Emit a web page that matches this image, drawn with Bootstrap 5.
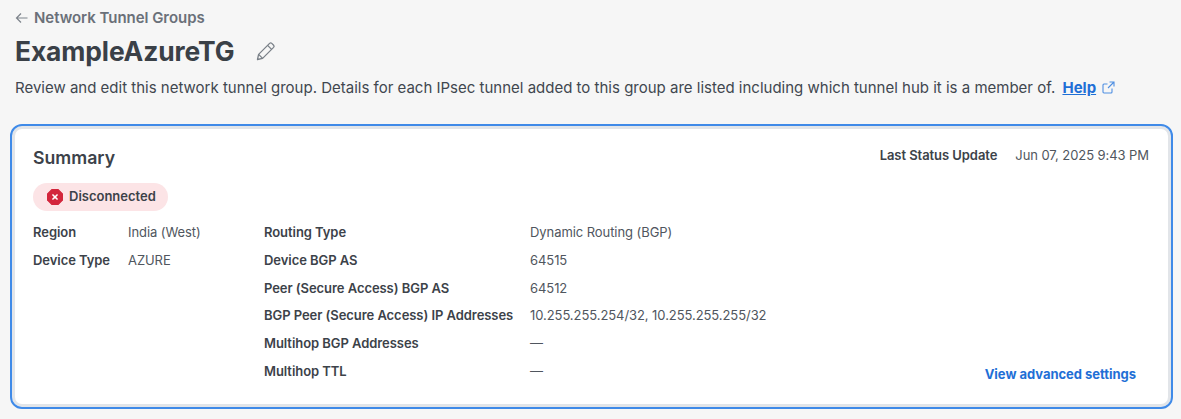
<!doctype html>
<html lang="en">
<head>
<meta charset="utf-8">
<title>ExampleAzureTG</title>
<link rel="stylesheet" href="https://cdn.jsdelivr.net/npm/bootstrap@5.3.0/dist/css/bootstrap.min.css">
<style>
html,body{height:100%;}
body{background:#f6f6f6;font-family:Inter,"Liberation Sans",sans-serif;color:#3c4249;overflow:hidden;}
.pg{padding:9px 8px 0 10px;}
.crumb{margin-left:5px;height:18px;font-size:15px;line-height:18px;font-weight:600;color:#6a7079;gap:5px;letter-spacing:-.04px;}
.crumb svg{display:block;}
.ttl{margin:6px 0 0 5px;height:36px;gap:20px;}
.ttl h1{font-size:26.4px;line-height:36px;font-weight:700;color:#3a4047;margin:0;letter-spacing:-.1px;}
.desc{margin:9px 0 0 5px;font-size:15px;line-height:20px;color:#41474f;white-space:nowrap;letter-spacing:0;}
.desc a{color:#1f6fd6;font-weight:700;margin-left:3px;}
.desc svg{margin-left:2px;vertical-align:-1px;}
.sumcard{margin-top:26px;height:285px;border:2px solid #3f8ae8;border-radius:12px;background:#fff;box-shadow:inset 0 0 0 3px #e2e5e9;padding:0 22px 0 21px;position:relative;}
.headrow{padding-top:20px;height:51px;}
.headrow h2{font-size:17.7px;line-height:24px;font-weight:600;color:#3c4249;margin:0;}
.upd{font-size:13px;line-height:20px;margin-top:-1px;gap:18px;}
.lbl{font-size:13px;line-height:16px;font-weight:600;color:#3c4249;white-space:nowrap;letter-spacing:-.06px;}
.val{font-size:13px;line-height:16px;color:#50565e;white-space:nowrap;letter-spacing:-.07px;}
.upd .lbl,.upd .val{line-height:20px;}
.pillx{height:28px;margin-top:6px;padding:0 12px 0 14px;background:#fce4e6;border-radius:14px;font-size:13px;font-weight:600;color:#3c4249;gap:6px;width:135px;}
.cols{margin-top:13px;}
.grida,.gridb{display:grid;row-gap:11.8px;column-gap:18px;align-content:start;}
.grida{grid-template-columns:77px 120px;width:231px;}
.gridb{grid-template-columns:249px auto;column-gap:17px;}
.adv{position:absolute;right:35px;bottom:25px;font-size:13px;line-height:16px;font-weight:700;color:#1f6fd6;text-decoration:none;letter-spacing:-.03px;}
</style>
</head>
<body>
<main class="pg">
  <div class="crumb d-flex align-items-center">
    <svg width="14" height="12" viewBox="0 0 14 12" fill="none" stroke="#7d838b" stroke-width="1.2"><path d="M12.5 6H1.5M6 1.5 1.5 6 6 10.5"/></svg>
    <span>Network Tunnel Groups</span>
  </div>
  <div class="ttl d-flex align-items-center">
    <h1>ExampleAzureTG</h1>
    <svg width="22" height="22" viewBox="0 0 22 22" fill="none" stroke="#7a8088" stroke-width="1.3" stroke-linejoin="round"><path d="M2.5 19.5 3.6 14.4 14.6 3.4a1.6 1.6 0 0 1 2.2 0l1.8 1.8a1.6 1.6 0 0 1 0 2.2L7.6 18.4Z"/><path d="M12.6 5.4l4 4M3.6 14.4l4 4"/></svg>
  </div>
  <p class="desc mb-0">Review and edit this network tunnel group. Details for each IPsec tunnel added to this group are listed including which tunnel hub it is a member of. <a href="#">Help</a> <svg width="13" height="13" viewBox="0 0 13 13" fill="none" stroke="#4f8fe2" stroke-width="1.1"><path d="M10 7.5V11a1 1 0 0 1-1 1H2a1 1 0 0 1-1-1V4a1 1 0 0 1 1-1h3.5M7.5 1H12v4.5M12 1 6 7"/></svg></p>

  <section class="sumcard">
    <div class="headrow d-flex justify-content-between">
      <h2>Summary</h2>
      <div class="upd d-flex"><span class="lbl">Last Status Update</span><span class="val">Jun 07, 2025 9:43 PM</span></div>
    </div>
    <div class="pillx d-inline-flex align-items-center">
      <svg width="16" height="16" viewBox="0 0 14 14"><path d="M4.2 0.5h5.6l3.7 3.7v5.6l-3.7 3.7H4.2L.5 9.8V4.2Z" fill="#d3263c" stroke="#d3263c" stroke-linejoin="round"/><path d="M5.2 5.2l3.6 3.6M8.8 5.2l-3.6 3.6" stroke="#fff" stroke-width="1.4" stroke-linecap="round"/></svg>
      <span>Disconnected</span>
    </div>
    <div class="cols d-flex">
      <div class="grida">
        <span class="lbl">Region</span><span class="val">India (West)</span>
        <span class="lbl">Device Type</span><span class="val">AZURE</span>
      </div>
      <div class="gridb">
        <span class="lbl">Routing Type</span><span class="val">Dynamic Routing (BGP)</span>
        <span class="lbl">Device BGP AS</span><span class="val">64515</span>
        <span class="lbl">Peer (Secure Access) BGP AS</span><span class="val">64512</span>
        <span class="lbl">BGP Peer (Secure Access) IP Addresses</span><span class="val">10.255.255.254/32, 10.255.255.255/32</span>
        <span class="lbl">Multihop BGP Addresses</span><span class="val">—</span>
        <span class="lbl">Multihop TTL</span><span class="val">—</span>
      </div>
    </div>
    <a class="adv" href="#">View advanced settings</a>
  </section>
</main>
<script src="https://cdn.jsdelivr.net/npm/bootstrap@5.3.0/dist/js/bootstrap.bundle.min.js"></script>
</body>
</html>
